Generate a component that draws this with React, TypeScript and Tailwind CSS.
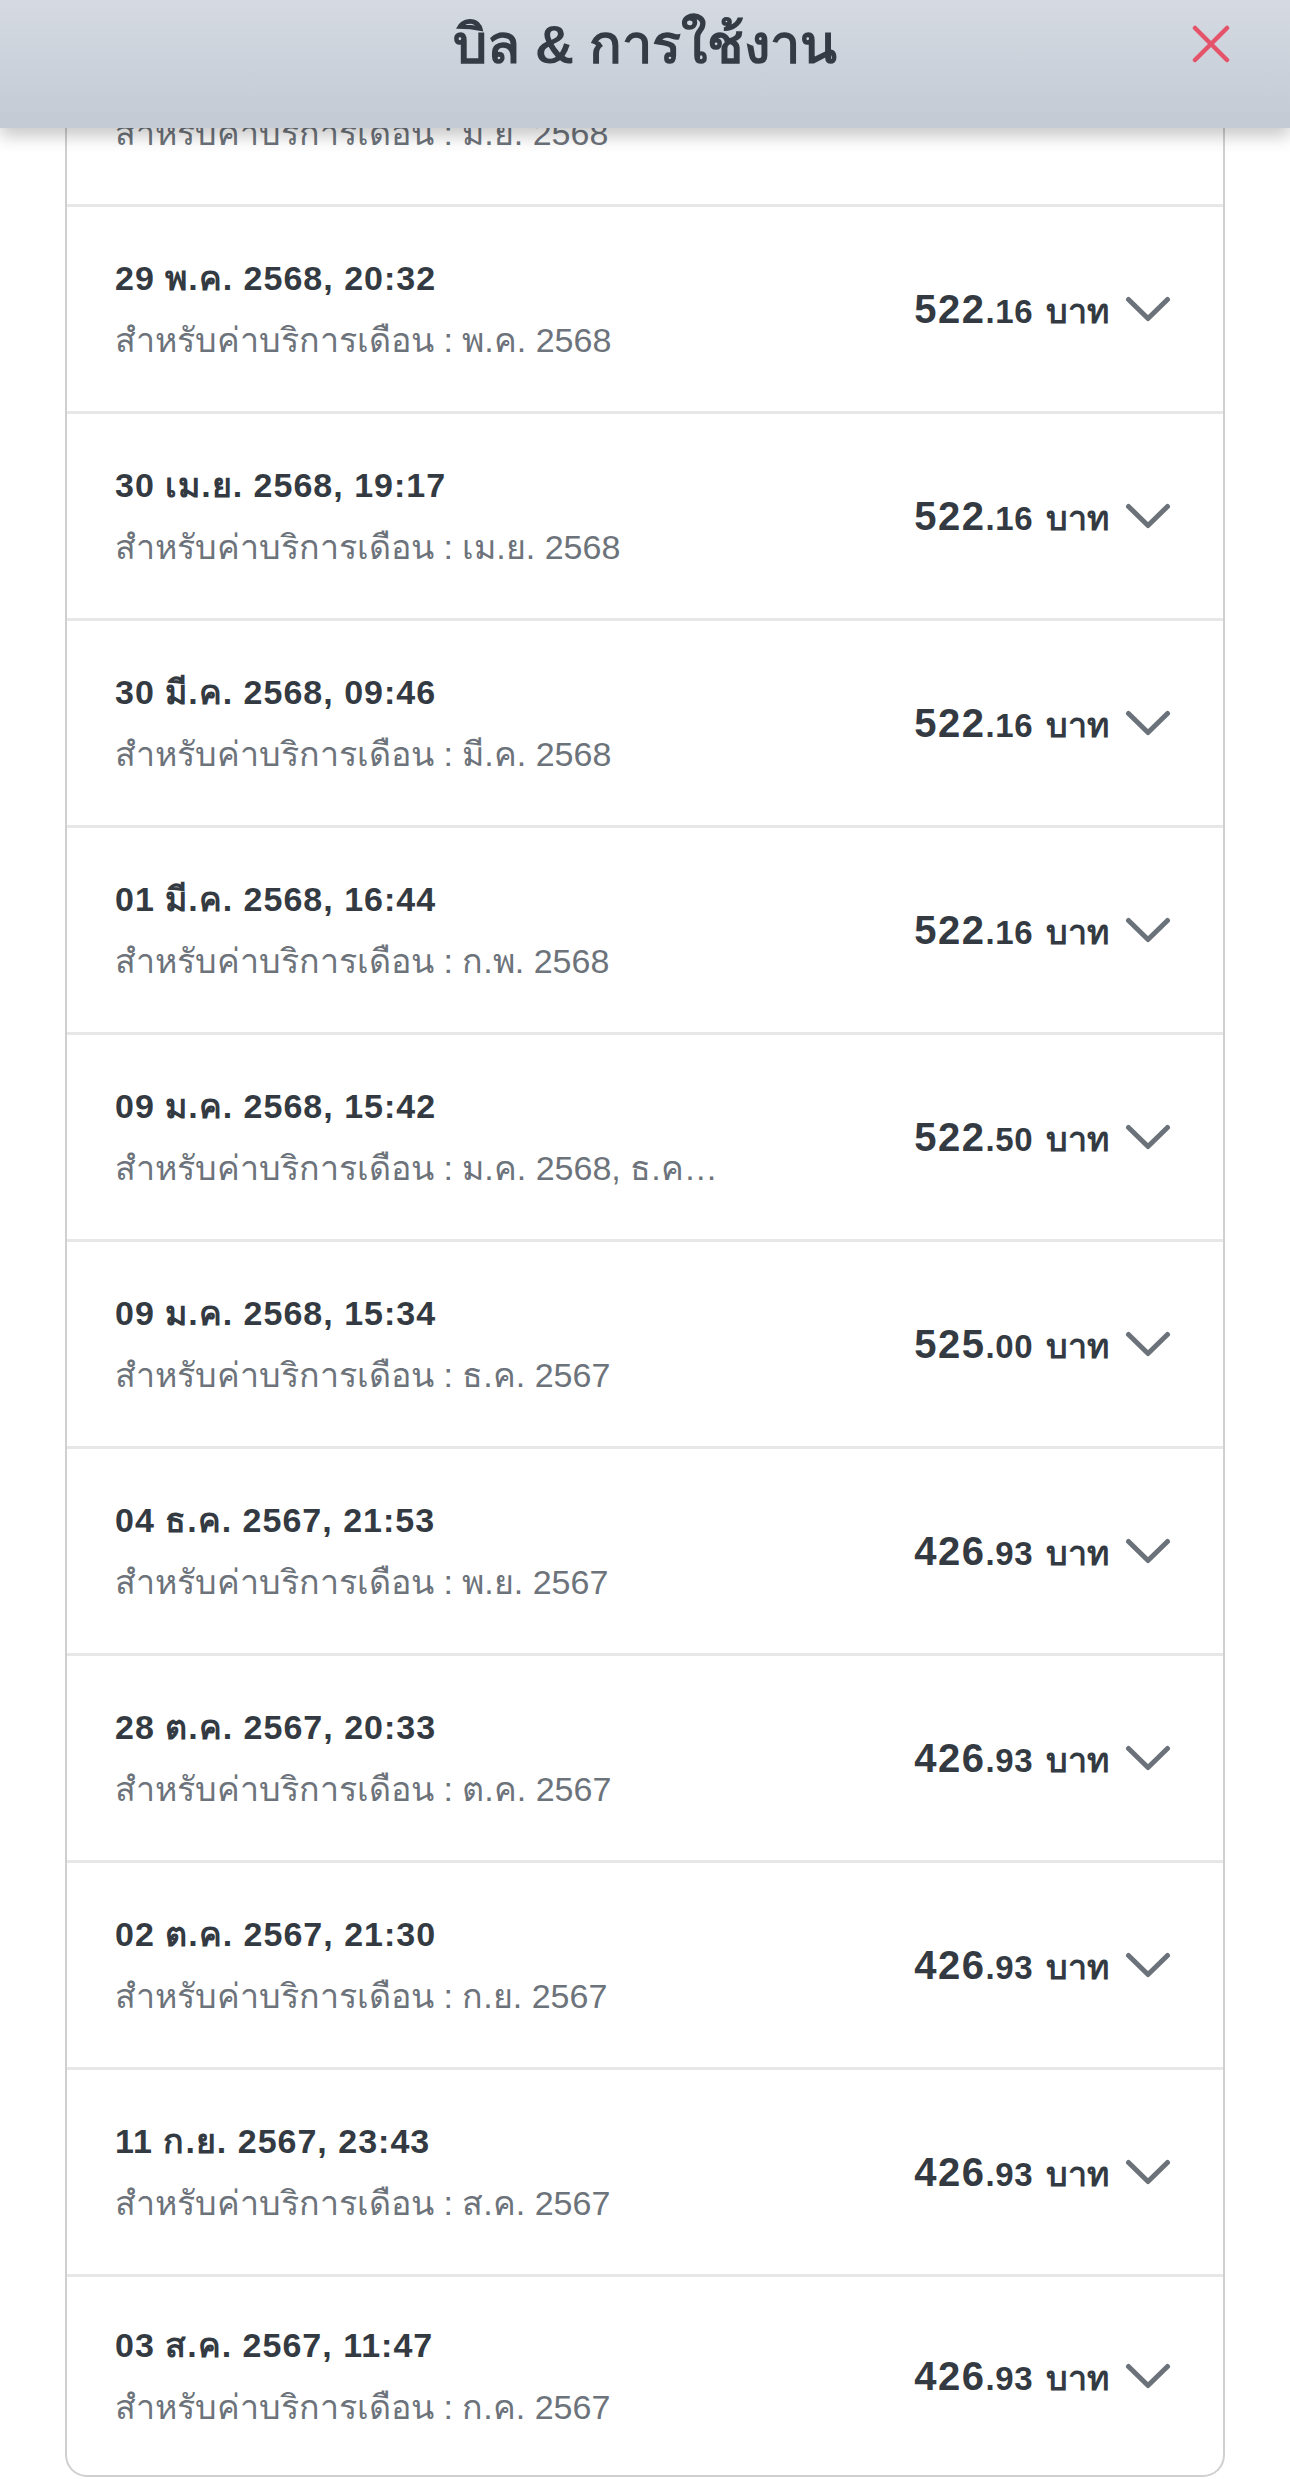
import React from 'react';

interface Bill {
  paidAt: string;
  period: string;
  baht: string;
  satang: string;
}

const bills: Bill[] = [
  { paidAt: '28 มิ.ย. 2568, 20:11', period: 'มิ.ย. 2568', baht: '522', satang: '16' },
  { paidAt: '29 พ.ค. 2568, 20:32', period: 'พ.ค. 2568', baht: '522', satang: '16' },
  { paidAt: '30 เม.ย. 2568, 19:17', period: 'เม.ย. 2568', baht: '522', satang: '16' },
  { paidAt: '30 มี.ค. 2568, 09:46', period: 'มี.ค. 2568', baht: '522', satang: '16' },
  { paidAt: '01 มี.ค. 2568, 16:44', period: 'ก.พ. 2568', baht: '522', satang: '16' },
  { paidAt: '09 ม.ค. 2568, 15:42', period: 'ม.ค. 2568, ธ.ค. 2567', baht: '522', satang: '50' },
  { paidAt: '09 ม.ค. 2568, 15:34', period: 'ธ.ค. 2567', baht: '525', satang: '00' },
  { paidAt: '04 ธ.ค. 2567, 21:53', period: 'พ.ย. 2567', baht: '426', satang: '93' },
  { paidAt: '28 ต.ค. 2567, 20:33', period: 'ต.ค. 2567', baht: '426', satang: '93' },
  { paidAt: '02 ต.ค. 2567, 21:30', period: 'ก.ย. 2567', baht: '426', satang: '93' },
  { paidAt: '11 ก.ย. 2567, 23:43', period: 'ส.ค. 2567', baht: '426', satang: '93' },
  { paidAt: '03 ส.ค. 2567, 11:47', period: 'ก.ค. 2567', baht: '426', satang: '93' },
];

const Chevron = () => (
  <svg width="46" height="26" viewBox="0 0 46 26" fill="none">
    <path d="M3.5 3.5 L23 22.5 L42.5 3.5" stroke="#6b727a" strokeWidth="5" strokeLinecap="round" strokeLinejoin="round" />
  </svg>
);

const CloseIcon = () => (
  <svg width="38" height="38" viewBox="0 0 38 38" fill="none">
    <path d="M3 3 L35 35 M35 3 L3 35" stroke="#e4536a" strokeWidth="4.5" strokeLinecap="round" />
  </svg>
);

const BillRow = ({ bill, last }: { bill: Bill; last: boolean }) => (
  <div
    className={`flex items-center justify-between pl-[48px] pr-[52px] ${
      last ? 'h-[198px]' : 'h-[207px] border-b-[3px] border-[#e7e7e7]'
    }`}
  >
    <div className="flex flex-col gap-[22px] max-w-[610px] min-w-0">
      <span className="text-[34px] leading-[40px] font-bold tracking-[1px] text-[#343a42] truncate">
        {bill.paidAt}
      </span>
      <span className="text-[34px] leading-[40px] text-[#6d737b] truncate">
        สำหรับค่าบริการเดือน : {bill.period}
      </span>
    </div>
    <div className="flex items-center gap-[16px]">
      <div className="flex items-baseline font-bold text-[#343a42]">
        <span className="text-[40px] tracking-[1.5px]">{bill.baht}</span>
        <span className="text-[33px] tracking-[0.5px]">.{bill.satang}</span>
        <span className="text-[34px] ml-[13px]">บาท</span>
      </div>
      <Chevron />
    </div>
  </div>
);

export default function App() {
  return (
    <div className="relative min-h-screen bg-white font-['Liberation_Sans','Noto_Sans',sans-serif]">
      <div className="absolute inset-x-0 top-0 z-10 h-[128px] bg-gradient-to-b from-[#d5dae2] to-[#c3cad4] shadow-[0_8px_16px_rgba(0,0,0,0.22)]">
        <div className="grid grid-cols-[1fr_auto_1fr] items-center h-[88px]">
          <div />
          <h1 className="text-[54px] font-bold text-[#353b45] leading-none">บิล &amp; การใช้งาน</h1>
          <div className="flex justify-end pr-[60px]">
            <CloseIcon />
          </div>
        </div>
      </div>

      {/* Bill list card */}
      <div className="mx-[65px] border-x-2 border-b-2 border-[#d0d0d0] rounded-b-[22px] overflow-hidden">
        {bills.map((bill, i) => (
          <BillRow key={i} bill={bill} last={i === bills.length - 1} />
        ))}
      </div>
    </div>
  );
}
